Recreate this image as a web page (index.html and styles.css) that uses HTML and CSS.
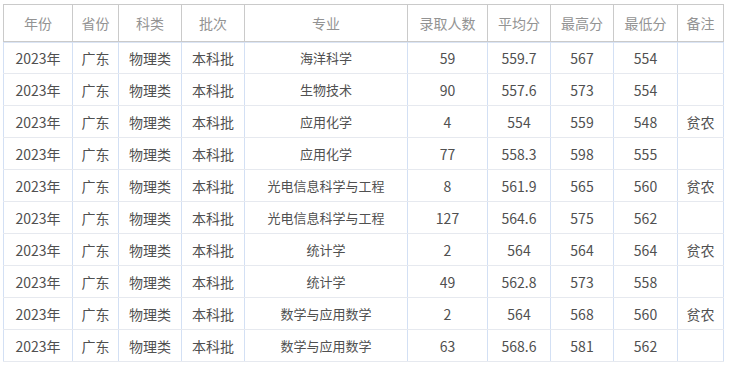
FILE: index.html
```html
<!DOCTYPE html>
<html lang="zh">
<head>
<meta charset="utf-8">
<link rel="stylesheet" href="styles.css">
</head>
<body>
<table class="score-table">
  <colgroup>
    <col class="c-year"><col class="c-prov"><col class="c-type"><col class="c-batch"><col class="c-major"><col class="c-num"><col class="c-avg"><col class="c-max"><col class="c-min"><col class="c-note">
  </colgroup>
  <thead>
    <tr><th>年份</th><th>省份</th><th>科类</th><th>批次</th><th>专业</th><th>录取人数</th><th>平均分</th><th>最高分</th><th>最低分</th><th>备注</th></tr>
  </thead>
  <tbody>
    <tr><td>2023年</td><td>广东</td><td>物理类</td><td>本科批</td><td class="major">海洋科学</td><td>59</td><td>559.7</td><td>567</td><td>554</td><td></td></tr>
    <tr><td>2023年</td><td>广东</td><td>物理类</td><td>本科批</td><td class="major">生物技术</td><td>90</td><td>557.6</td><td>573</td><td>554</td><td></td></tr>
    <tr><td>2023年</td><td>广东</td><td>物理类</td><td>本科批</td><td class="major">应用化学</td><td>4</td><td>554</td><td>559</td><td>548</td><td>贫农</td></tr>
    <tr><td>2023年</td><td>广东</td><td>物理类</td><td>本科批</td><td class="major">应用化学</td><td>77</td><td>558.3</td><td>598</td><td>555</td><td></td></tr>
    <tr><td>2023年</td><td>广东</td><td>物理类</td><td>本科批</td><td class="major">光电信息科学与工程</td><td>8</td><td>561.9</td><td>565</td><td>560</td><td>贫农</td></tr>
    <tr><td>2023年</td><td>广东</td><td>物理类</td><td>本科批</td><td class="major">光电信息科学与工程</td><td>127</td><td>564.6</td><td>575</td><td>562</td><td></td></tr>
    <tr><td>2023年</td><td>广东</td><td>物理类</td><td>本科批</td><td class="major">统计学</td><td>2</td><td>564</td><td>564</td><td>564</td><td>贫农</td></tr>
    <tr><td>2023年</td><td>广东</td><td>物理类</td><td>本科批</td><td class="major">统计学</td><td>49</td><td>562.8</td><td>573</td><td>558</td><td></td></tr>
    <tr><td>2023年</td><td>广东</td><td>物理类</td><td>本科批</td><td class="major">数学与应用数学</td><td>2</td><td>564</td><td>568</td><td>560</td><td>贫农</td></tr>
    <tr><td>2023年</td><td>广东</td><td>物理类</td><td>本科批</td><td class="major">数学与应用数学</td><td>63</td><td>568.6</td><td>581</td><td>562</td><td></td></tr>
  </tbody>
</table>
</body>
</html>
```

FILE: styles.css
```css
html, body {
  margin: 0;
  background: #fff;
}
body {
  padding: 4px 0 0 3px;
  font-family: "Noto Sans CJK SC", "Noto Sans", sans-serif;
}
.score-table {
  border-collapse: collapse;
  table-layout: fixed;
  width: 720px;
  font-size: 14px;
  line-height: 18px;
}
.c-year { width: 69px; }
.c-prov { width: 46px; }
.c-type { width: 63px; }
.c-batch { width: 63px; }
.c-major { width: 163px; }
.c-num { width: 80px; }
.c-avg { width: 63px; }
.c-max { width: 63px; }
.c-min { width: 64px; }
.c-note { width: 46px; }

.score-table th {
  height: 36px;
  padding: 0;
  font-weight: normal;
  color: #939393;
  border: 1px solid #cacaca;
  text-align: center;
  vertical-align: middle;
}
.score-table td {
  height: 31px;
  padding: 0;
  color: #505050;
  text-align: center;
  vertical-align: middle;
  border-top: 1px solid #e6e9ef;
  border-bottom: 1px solid #e6e9ef;
  border-left: 1px solid #d3e0f4;
  border-right: 1px solid #d3e0f4;
  white-space: nowrap;
}
.score-table tbody tr:first-child td {
  box-shadow: inset 0 1px 0 #dbe5f5;
}
.score-table td.major {
  font-size: 13px;
}
```
